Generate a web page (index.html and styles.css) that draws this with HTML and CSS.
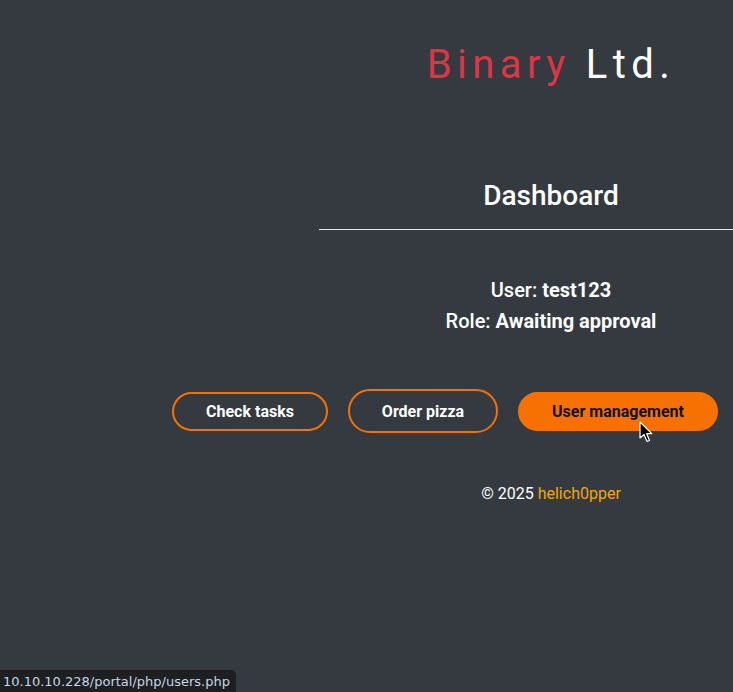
FILE: index.html
```html
<!DOCTYPE html>
<html lang="en">
<head>
<meta charset="utf-8">
<title>Binary Ltd. - Dashboard</title>
<link rel="stylesheet" href="styles.css">
</head>
<body>
<div class="page">
  <header class="brand-col">
    <h1 class="brand"><span class="brand-red">Binary</span> Ltd.</h1>
  </header>
  <section class="dash-col">
    <h2 class="dash-title">Dashboard</h2>
    <hr class="rule">
    <div class="info">
      <p class="info-line"><span class="label">User:</span> <strong>test123</strong></p>
      <p class="info-line"><span class="label">Role:</span> <strong>Awaiting approval</strong></p>
    </div>
  </section>
  <nav class="actions">
    <a class="btn btn-outline" href="#">Check tasks</a>
    <button class="btn btn-outline btn-tall" type="button">Order pizza</button>
    <a class="btn btn-fill" href="#">User management</a>
  </nav>
  <footer class="foot">© 2025 <a class="foot-link" href="#">helich0pper</a></footer>
</div>
<svg class="cursor" width="14" height="22" viewBox="0 0 14 22" aria-hidden="true">
  <path d="M1 1 L1 17 L5 13.5 L8 20.5 L10.5 19.5 L7.6 12.6 L12.8 12.6 Z" fill="#000" stroke="#fff" stroke-width="1.2" stroke-linejoin="round"/>
</svg>
<div class="status">10.10.10.228/portal/php/users.php</div>
</body>
</html>
```

FILE: styles.css
```css
html, body {
  margin: 0;
  padding: 0;
  background: #343a40;
  overflow: hidden;
  height: 100%;
}
body {
  font-family: Roboto, "Liberation Sans", sans-serif;
  color: #fff;
  width: 733px;
  height: 692px;
  position: relative;
}
.page {
  display: flex;
  flex-direction: column;
}
.brand-col,
.dash-col {
  margin-left: 319px;
  width: 464px;
  text-align: center;
}
.brand {
  margin: 0;
  padding-top: 41px;
  font-size: 40px;
  font-weight: 400;
  letter-spacing: 5.4px;
  line-height: 48px;
}
.brand-red {
  color: #dc3545;
}
.dash-col {
  padding-top: 90px;
}
.dash-title {
  margin: 0;
  font-size: 28px;
  font-weight: 500;
  line-height: 34px;
}
.rule {
  margin: 16px 0 0 0;
  border: 0;
  border-top: 1px solid #e6e6e6;
  height: 0;
}
.info {
  padding-top: 45px;
}
.info-line {
  margin: 0;
  font-size: 20px;
  line-height: 31px;
}
.label {
  font-weight: 500;
}
.info-line strong {
  font-weight: 700;
}
.actions {
  display: flex;
  align-items: center;
  gap: 20px;
  padding-left: 172px;
  margin-top: 52px;
}
.btn {
  box-sizing: border-box;
  display: inline-flex;
  align-items: center;
  justify-content: center;
  height: 39px;
  border-radius: 20px;
  border: 2px solid #f77102;
  font-family: Roboto, "Liberation Sans", sans-serif;
  font-size: 16px;
  font-weight: 700;
  text-decoration: none;
  color: #fff;
  background: transparent;
  padding: 0;
}
.actions .btn:nth-child(1) { width: 156px; }
.actions .btn:nth-child(2) { width: 150px; }
.actions .btn:nth-child(3) { width: 200px; }
.btn-tall {
  height: 44px;
  border-radius: 22px;
}
.btn-fill {
  background: #f77102;
  color: #111;
}
.foot {
  margin-left: 319px;
  width: 464px;
  text-align: center;
  font-size: 16px;
  line-height: 20px;
  margin-top: 51px;
}
.foot-link {
  color: #f9a30c;
  text-decoration: none;
}
.cursor {
  position: absolute;
  left: 639px;
  top: 421px;
}
.status {
  position: absolute;
  left: 0;
  bottom: 0;
  height: 22px;
  padding: 0 6px 0 3px;
  background: #1d1f22;
  border-top-right-radius: 5px;
  color: #c9d6e3;
  font-family: "DejaVu Sans", sans-serif;
  font-size: 13px;
  line-height: 23px;
  white-space: nowrap;
}
```
